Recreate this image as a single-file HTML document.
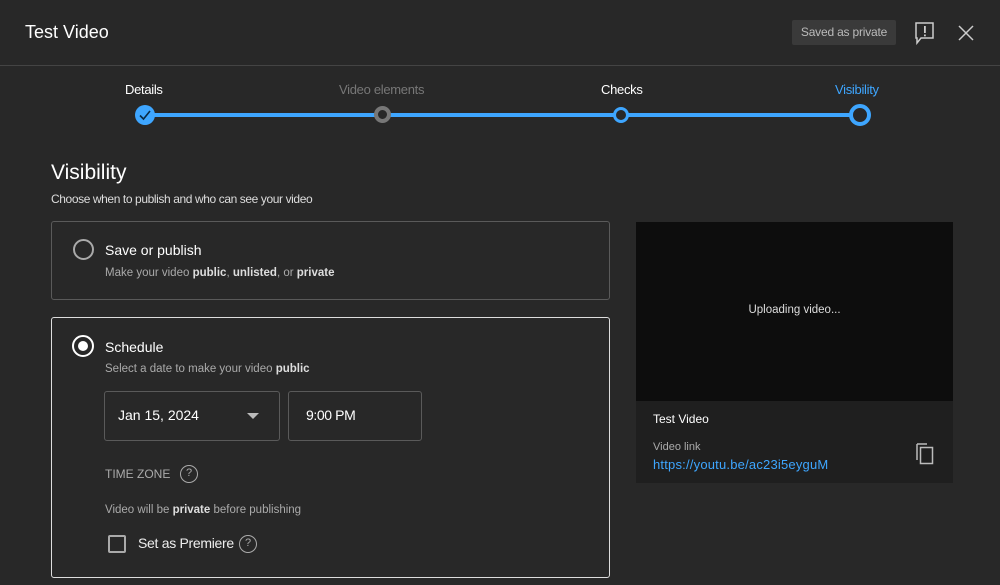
<!DOCTYPE html>
<html><head><meta charset="utf-8"><style>
*{margin:0;padding:0;box-sizing:border-box}
body{width:1000px;height:585px;background:#282828;font-family:"Liberation Sans",sans-serif;color:#fff;position:relative;overflow:hidden}
.a{position:absolute}
.t{white-space:nowrap}
.box{position:absolute;border:1px solid #5a5a5a;border-radius:3px}
b{font-weight:bold;color:#ddd}
.s{letter-spacing:-0.3px}
</style></head><body>
<div class="a t" style="left:25px;top:22px;font-size:18px">Test Video</div>
<div class="a t" style="left:792px;top:20px;width:104px;height:25px;background:#3a3a3a;border-radius:2px;color:#bbb;font-size:12px;line-height:25px;text-align:center;letter-spacing:-0.2px">Saved as private</div>
<svg class="a" style="left:914px;top:21px" width="22" height="24" viewBox="0 0 22 24"><path d="M2 2H19V17H7L3 22V17H2Z" fill="none" stroke="#ccc" stroke-width="1.5"/><rect x="10" y="5" width="1.8" height="7" fill="#ccc"/><rect x="10" y="13.5" width="1.8" height="1.8" fill="#ccc"/></svg>
<svg class="a" style="left:957px;top:24px" width="18" height="18"><path d="M2 2L16 16M16 2L2 16" stroke="#ccc" stroke-width="1.5"/></svg>
<div class="a" style="left:0;top:65px;width:1000px;height:1px;background:#444"></div>

<div class="a" style="left:145px;top:113px;width:715px;height:4px;background:#3ea6ff"></div>
<div class="a t s" style="left:125px;top:82px;font-size:13px">Details</div>
<div class="a t s" style="left:339px;top:82px;font-size:13px;color:#777">Video elements</div>
<div class="a t s" style="left:601px;top:82px;font-size:13px">Checks</div>
<div class="a t s" style="left:835px;top:82px;font-size:13px;color:#3ea6ff">Visibility</div>
<svg class="a" style="left:134px;top:104px" width="22" height="22"><circle cx="11" cy="11" r="10" fill="#3ea6ff"/><path d="M6 11.5L9.5 15L16 7" stroke="#0a2a44" stroke-width="1.6" fill="none"/></svg>
<div class="a" style="left:374px;top:106px;width:17px;height:17px;border-radius:50%;border:4px solid #777;background:#282828"></div>
<div class="a" style="left:613px;top:107px;width:16px;height:16px;border-radius:50%;border:3px solid #3ea6ff;background:#282828"></div>
<div class="a" style="left:849px;top:104px;width:22px;height:22px;border-radius:50%;border:4px solid #3ea6ff;background:#282828"></div>

<div class="a t" style="left:51px;top:161px;font-size:21px">Visibility</div>
<div class="a t" style="left:51px;top:192px;font-size:12px;color:#ddd;letter-spacing:-0.4px">Choose when to publish and who can see your video</div>

<div class="box" style="left:51px;top:221px;width:559px;height:79px"></div>
<div class="a" style="left:73px;top:239px;width:21px;height:21px;border-radius:50%;border:2px solid #aaa"></div>
<div class="a t" style="left:105px;top:242px;font-size:14px">Save or publish</div>
<div class="a t" style="left:105px;top:267px;font-size:11.5px;color:#aaa">Make your video <b>public</b>, <b>unlisted</b>, or <b>private</b></div>

<div class="box" style="left:51px;top:317px;width:559px;height:261px;border:1.5px solid #ddd"></div>
<div class="a" style="left:72px;top:335px;width:22px;height:22px;border-radius:50%;border:2px solid #fff"></div>
<div class="a" style="left:78px;top:341px;width:10px;height:10px;border-radius:50%;background:#fff"></div>
<div class="a t" style="left:105px;top:339px;font-size:14px">Schedule</div>
<div class="a t" style="left:105px;top:363px;font-size:11.5px;color:#aaa">Select a date to make your video <b>public</b></div>
<div class="box" style="left:104px;top:391px;width:176px;height:50px"></div>
<div class="a t" style="left:118px;top:407px;font-size:14px">Jan 15, 2024</div>
<div class="a" style="left:247px;top:413px;width:0;height:0;border-left:6px solid transparent;border-right:6px solid transparent;border-top:6px solid #bbb"></div>
<div class="box" style="left:288px;top:391px;width:134px;height:50px"></div>
<div class="a t" style="left:306px;top:407px;font-size:14px;letter-spacing:-0.4px">9:00 PM</div>
<div class="a t" style="left:105px;top:467px;font-size:12px;color:#aaa">TIME ZONE</div>
<div class="a" style="left:180px;top:465px;width:18px;height:18px;border-radius:50%;border:1.5px solid #aaa;color:#aaa;font-size:11px;text-align:center;line-height:15px">?</div>
<div class="a t" style="left:105px;top:504px;font-size:11.5px;color:#aaa">Video will be <b>private</b> before publishing</div>
<div class="a" style="left:108px;top:535px;width:18px;height:18px;border:2px solid #aaa;border-radius:2px"></div>
<div class="a t" style="left:138px;top:535px;font-size:14px;color:#eee;letter-spacing:-0.3px">Set as Premiere</div>
<div class="a" style="left:239px;top:535px;width:18px;height:18px;border-radius:50%;border:1.5px solid #aaa;color:#aaa;font-size:11px;text-align:center;line-height:15px">?</div>

<div class="a" style="left:636px;top:222px;width:317px;height:179px;background:#0d0d0d"></div>
<div class="a t" style="left:636px;top:304px;width:317px;text-align:center;font-size:11.5px;color:#ddd">Uploading video...</div>
<div class="a" style="left:636px;top:401px;width:317px;height:82px;background:#1f1f1f"></div>
<div class="a t" style="left:653px;top:412px;font-size:12px">Test Video</div>
<div class="a t" style="left:653px;top:441px;font-size:11px;color:#aaa">Video link</div>
<div class="a t" style="left:653px;top:457px;font-size:13px;color:#3ea6ff;letter-spacing:0.2px">https://youtu.be/ac23i5eyguM</div>
<svg class="a" style="left:914px;top:442px" width="22" height="24"><path d="M3 2H13M3 2V18" stroke="#bbb" stroke-width="1.5" fill="none"/><rect x="6.5" y="5.5" width="12" height="16" fill="none" stroke="#bbb" stroke-width="1.5"/></svg>
</body></html>
